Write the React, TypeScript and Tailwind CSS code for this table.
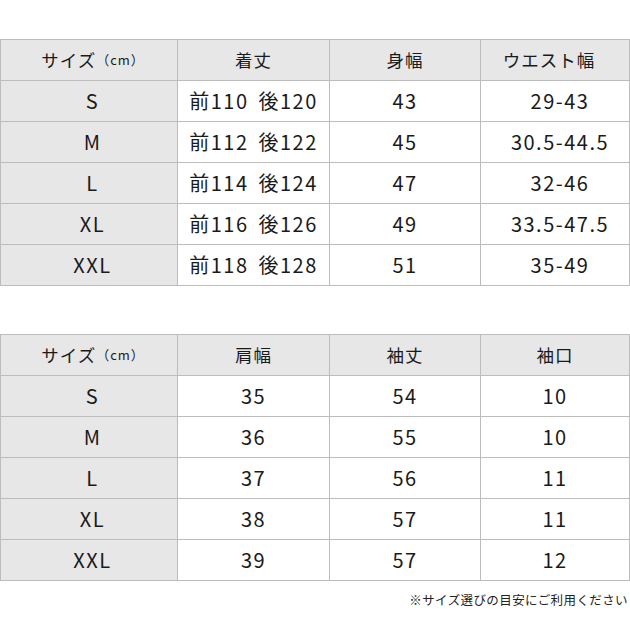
const font = { fontFamily: '"Noto Sans CJK JP", "Noto Sans", sans-serif' }

type Row = { size: string; cells: string[] }

const table1Head = ['着丈', '身幅', 'ウエスト幅']
const table1Rows: Row[] = [
  { size: 'S', cells: ['前110 後120', '43', '29-43'] },
  { size: 'M', cells: ['前112 後122', '45', '30.5-44.5'] },
  { size: 'L', cells: ['前114 後124', '47', '32-46'] },
  { size: 'XL', cells: ['前116 後126', '49', '33.5-47.5'] },
  { size: 'XXL', cells: ['前118 後128', '51', '35-49'] },
]

const table2Head = ['肩幅', '袖丈', '袖口']
const table2Rows: Row[] = [
  { size: 'S', cells: ['35', '54', '10'] },
  { size: 'M', cells: ['36', '55', '10'] },
  { size: 'L', cells: ['37', '56', '11'] },
  { size: 'XL', cells: ['38', '57', '11'] },
  { size: 'XXL', cells: ['39', '57', '12'] },
]

// "前110 後120" -> keep the gap between front/back a bit wider than a space
function Value({ text }: { text: string }) {
  const parts = text.split(' ')
  if (parts.length < 2) return <>{text}</>
  return (
    <>
      {parts[0]}
      <span className="inline-block w-[10px]" />
      {parts[1]}
    </>
  )
}

function SizeTable({ head, rows, wideLast }: { head: string[]; rows: Row[]; wideLast?: boolean }) {
  const cell = 'h-[41px] flex items-center justify-center border-r border-b border-[#bcbcbc]'
  return (
    <div className="grid grid-cols-[177px_152px_151px_149px] border-l border-t border-[#bcbcbc] text-[#1a1a1a]">
      {/* header row */}
      <div className={`${cell} bg-[#e7e7e7] text-[17.5px] tracking-[1px] pl-[8px]`}>
        サイズ<span className="text-[13px]">（cm）</span>
      </div>
      {head.map((h, i) => (
        <div
          key={h}
          className={`${cell} bg-[#e7e7e7] text-[17.5px] tracking-[1px] ${
            i === 2 && wideLast ? 'pr-[12px]' : ''
          }`}
        >
          {h}
        </div>
      ))}

      {rows.map((r) => (
        <>
          <div key={r.size} className={`${cell} bg-[#e7e7e7] text-[20px] tracking-[1.5px] pl-[7px]`}>
            {r.size}
          </div>
          {r.cells.map((c, i) => (
            <div
              key={r.size + i}
              className={`${cell} bg-white text-[20px] tracking-[1.5px] ${
                i === 2 && wideLast ? 'pl-[10px]' : ''
              }`}
            >
              <Value text={c} />
            </div>
          ))}
        </>
      ))}
    </div>
  )
}

export default function App() {
  return (
    <div className="w-[630px] h-[626px] bg-white pt-[39px]" style={font}>
      <SizeTable head={table1Head} rows={table1Rows} wideLast />
      <div className="mt-[48px]">
        <SizeTable head={table2Head} rows={table2Rows} />
      </div>
      <div className="mt-[10px] pr-[2px] text-right text-[12.5px] tracking-[0.4px] text-[#222]">
        ※サイズ選びの目安にご利用ください
      </div>
    </div>
  )
}
